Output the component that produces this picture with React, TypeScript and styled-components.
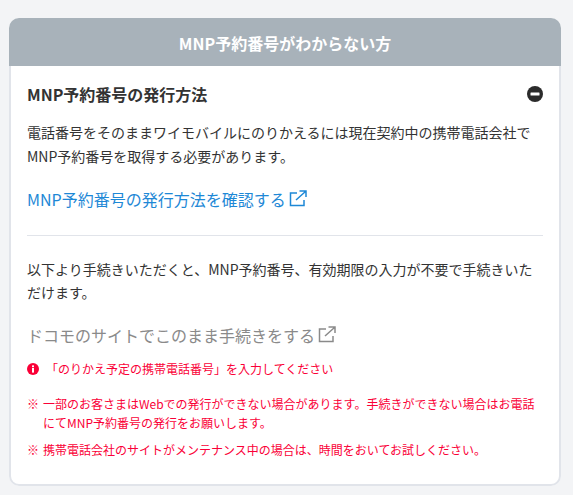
import React from 'react'
import styled, { createGlobalStyle } from 'styled-components'

const GlobalStyle = createGlobalStyle`
  html, body {
    margin: 0;
    background: #f3f4f6;
  }
  body {
    font-family: "Noto Sans CJK JP", "Noto Sans", sans-serif;
    color: #333;
  }
`

const Page = styled.div`
  padding: 18px 12px 0 9px;
`

const Card = styled.section`
  border-radius: 10px;
  background: #fff;
`

const CardHeader = styled.h2`
  margin: 0;
  height: 48px;
  border-radius: 10px 10px 0 0;
  background: #a8b2ba;
  color: #fff;
  font-size: 16px;
  font-weight: 700;
  line-height: 50px;
  text-align: center;
`

const CardBody = styled.div`
  padding: 15px 16px 25px;
  border: 2px solid #e1e4ea;
  border-top: 0;
  border-radius: 0 0 10px 10px;
`

const AccordionHead = styled.div`
  display: flex;
  align-items: center;
  justify-content: space-between;
  height: 26px;
`

const AccordionTitle = styled.h3`
  margin: 0;
  font-size: 16px;
  font-weight: 700;
  line-height: 26px;
`

const Text = styled.p<{ $top?: number }>`
  margin: ${(p) => p.$top ?? 14}px 0 0;
  font-size: 14px;
  line-height: 1.7;
`

const LinkRow = styled.a<{ $muted?: boolean }>`
  display: flex;
  align-items: center;
  gap: 3px;
  margin-top: 16px;
  font-size: 16px;
  line-height: 28px;
  color: ${(p) => (p.$muted ? '#8a8a8a' : '#1e88d6')};
  text-decoration: none;
`

const Divider = styled.hr`
  margin: 22px 0 0;
  border: 0;
  border-top: 1px solid #e1e4ea;
`

const ErrorRow = styled.div`
  display: flex;
  align-items: center;
  gap: 7px;
  margin-top: 10px;
  font-size: 12px;
  line-height: 20px;
  color: #fa0037;
`

const NoteList = styled.ul`
  margin: 15px 0 0;
  padding: 0;
  list-style: none;
`

const Note = styled.li`
  position: relative;
  padding-left: 16px;
  margin-top: 8px;
  font-size: 12px;
  line-height: 19px;
  color: #fa0037;

  &::before {
    content: '※';
    position: absolute;
    left: 0;
  }
`

const ExternalIcon: React.FC<{ color: string }> = ({ color }) => (
  <svg width="18" height="18" viewBox="0 0 18 18" fill="none" stroke={color} strokeWidth="1.5">
    <path d="M8 3H1.5v12.5H15V10" />
    <path d="M7 10L16.5 1.5M10.5 1h6.5v6" />
  </svg>
)

const MinusIcon = () => (
  <svg width="16" height="16" viewBox="0 0 16 16">
    <circle cx="8" cy="8" r="8" fill="#2b2b2b" />
    <rect x="3.5" y="6.5" width="9" height="3" rx="0.5" fill="#fff" />
  </svg>
)

const AlertIcon = () => (
  <svg width="12" height="12" viewBox="0 0 12 12">
    <circle cx="6" cy="6" r="6" fill="#fa0037" />
    <rect x="5" y="2.4" width="2" height="1.8" fill="#fff" />
    <rect x="5" y="5" width="2" height="4.6" fill="#fff" />
  </svg>
)

export default function App() {
  return (
    <>
      <GlobalStyle />
      <Page>
        <Card>
          <CardHeader>MNP予約番号がわからない方</CardHeader>
          <CardBody>
            <AccordionHead>
              <AccordionTitle>MNP予約番号の発行方法</AccordionTitle>
              <MinusIcon />
            </AccordionHead>
            <Text>
              電話番号をそのままワイモバイルにのりかえるには現在契約中の携帯電話会社でMNP予約番号を取得する必要があります。
            </Text>
            <LinkRow href="#">
              MNP予約番号の発行方法を確認する
              <ExternalIcon color="#1e88d6" />
            </LinkRow>
            <Divider />
            <Text $top={22}>
              以下より手続きいただくと、MNP予約番号、有効期限の入力が不要で手続きいただけます。
            </Text>
            <LinkRow href="#" $muted>
              ドコモのサイトでこのまま手続きをする
              <ExternalIcon color="#8a8a8a" />
            </LinkRow>
            <ErrorRow>
              <AlertIcon />
              「のりかえ予定の携帯電話番号」を入力してください
            </ErrorRow>
            <NoteList>
              <Note>
                一部のお客さまはWebでの発行ができない場合があります。手続きができない場合はお電話にてMNP予約番号の発行をお願いします。
              </Note>
              <Note>携帯電話会社のサイトがメンテナンス中の場合は、時間をおいてお試しください。</Note>
            </NoteList>
          </CardBody>
        </Card>
      </Page>
    </>
  )
}
